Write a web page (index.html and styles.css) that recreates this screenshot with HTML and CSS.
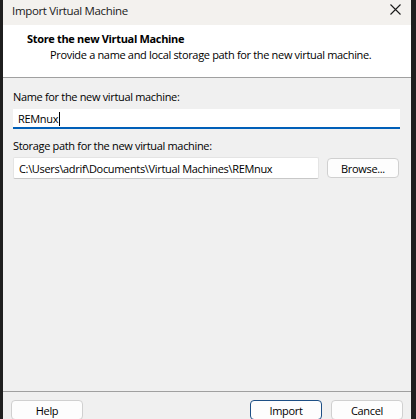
FILE: index.html
```html
<!DOCTYPE html>
<html>
<head>
<meta charset="utf-8">
<link rel="stylesheet" href="styles.css">
</head>
<body>
<div class="window">
  <div class="titlebar">
    <span class="title">Import Virtual Machine</span>
    <svg class="close" width="11" height="11" viewBox="0 0 11 11"><path d="M0.5 0.5 L10.5 10.5 M10.5 0.5 L0.5 10.5" stroke="#1a1a1a" stroke-width="1.1" fill="none"/></svg>
  </div>
  <div class="header">
    <div class="h-title">Store the new Virtual Machine</div>
    <div class="h-sub">Provide a name and local storage path for the new virtual machine.</div>
  </div>
  <div class="content">
    <div class="label">Name for the new virtual machine:</div>
    <div class="input name-input"><span>REMnux</span><span class="caret"></span></div>
    <div class="label label2">Storage path for the new virtual machine:</div>
    <div class="path-row">
      <div class="input path-input">C:\Users\adrif\Documents\Virtual Machines\REMnux</div>
      <div class="btn browse">Browse...</div>
    </div>
  </div>
  <div class="footer">
    <div class="btn">Help</div>
    <div class="spacer"></div>
    <div class="btn primary">Import</div>
    <div class="btn">Cancel</div>
  </div>
</div>
</body>
</html>
```

FILE: styles.css
```css
html, body {
  margin: 0;
  padding: 0;
  height: 100%;
  background: #1f1f1f;
  overflow: hidden;
}
body {
  font-family: "Open Sans", "Noto Sans", sans-serif;
  font-size: 11px;
  letter-spacing: -0.33px;
  color: #000;
  white-space: nowrap;
}
.window {
  margin-left: 3px;
  width: 408px;
  height: 419px;
  background: #f0f0f0;
  display: flex;
  flex-direction: column;
}
.titlebar {
  height: 25px;
  flex: none;
  background: #f3f1ee;
  display: flex;
  align-items: center;
  justify-content: space-between;
  padding: 0 10px 0 9px;
  box-sizing: border-box;
}
.title {
  font-size: 11.5px;
  color: #1a1a1a;
  position: relative;
  top: -2px;
}
.close {
  position: relative;
  top: -3px;
}
.header {
  flex: none;
  background: #fff;
  height: 53px;
  border-bottom: 1px solid #a0a0a0;
  box-sizing: border-box;
  padding-top: 6px;
}
.h-title {
  font-weight: bold;
  margin-left: 24px;
  line-height: 16px;
}
.h-sub {
  margin-left: 47px;
  line-height: 16px;
}
.content {
  flex: 1;
  padding: 11px 10px 0 10px;
  border-bottom: 1px solid #a0a0a0;
}
.label {
  line-height: 16px;
}
.label2 {
  margin-top: 9px;
}
.input {
  background: #fff;
  box-sizing: border-box;
  padding-left: 5px;
  display: flex;
  align-items: center;
}
.name-input {
  height: 20px;
  margin-top: 4px;
  width: 387px;
  border-bottom: 2px solid #005fb8;
  padding-top: 1px;
}
.caret {
  display: inline-block;
  width: 1px;
  height: 14px;
  background: #000;
  margin-left: 1px;
}
.path-row {
  display: flex;
  align-items: center;
  margin-top: 3px;
}
.path-input {
  width: 306px;
  height: 22px;
  border: 1px solid #e4e4e4;
  border-bottom-color: #c8c8c8;
  border-radius: 2px;
}
.btn {
  width: 72px;
  height: 20px;
  box-sizing: border-box;
  background: #fdfdfd;
  border: 1px solid #d0d0d0;
  border-radius: 4px;
  display: flex;
  align-items: center;
  justify-content: center;
}
.browse {
  margin-left: 8px;
}
.footer {
  flex: none;
  height: 27px;
  display: flex;
  align-items: flex-start;
  padding: 8px 8px 0 8px;
  box-sizing: border-box;
  gap: 9px;
}
.spacer {
  flex: 1;
}
.primary {
  border: 1px solid #1d4f85;
}
```
